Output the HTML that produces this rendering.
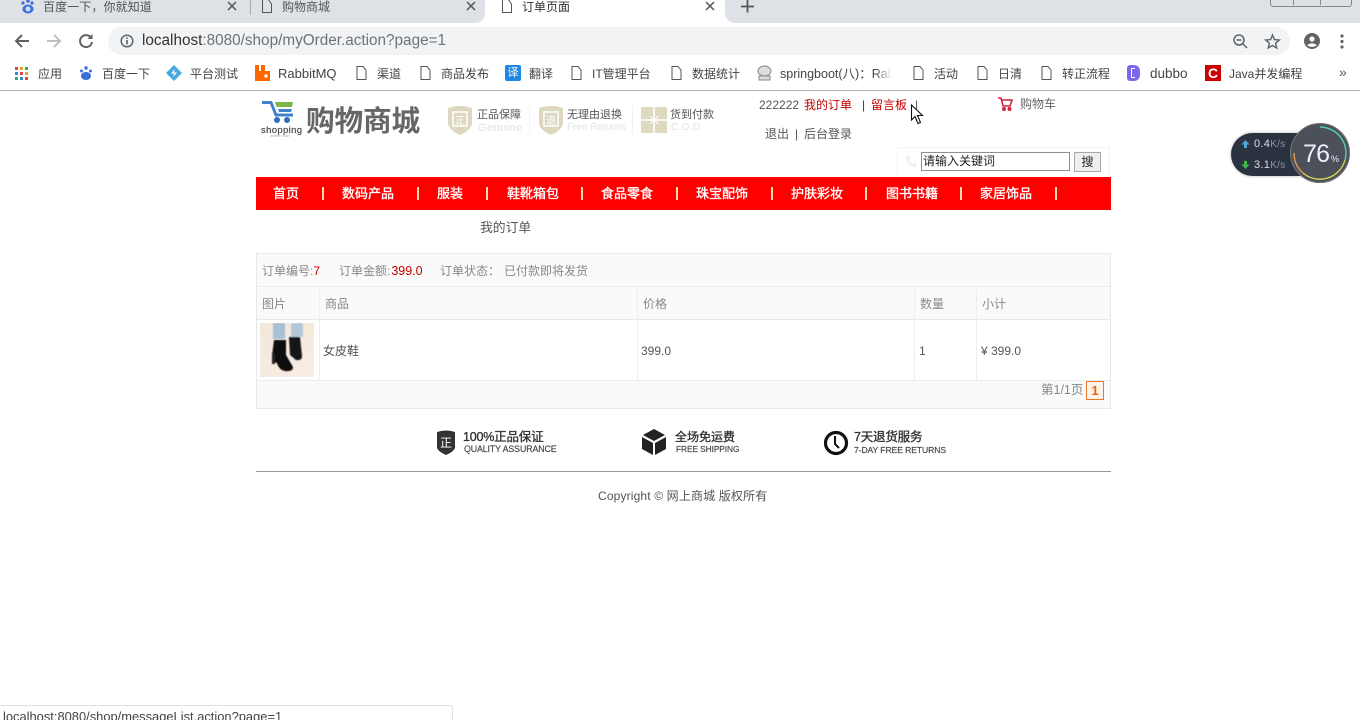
<!DOCTYPE html>
<html lang="zh-CN"><head><meta charset="utf-8"><title>订单页面</title>
<style>
html,body{margin:0;padding:0;width:1360px;height:720px;overflow:hidden;background:#fff}
body{position:relative;font-family:"Liberation Sans","WenQuanYi Zen Hei","Noto Sans CJK SC",sans-serif;font-size:12px;color:#555}
.t{position:absolute;white-space:nowrap;line-height:16px;height:16px}
.b{position:absolute}
svg{position:absolute;overflow:visible}
.bm{font-size:12px;color:#444}
.nav{color:#fff;font-size:13px;font-weight:normal;-webkit-text-stroke:.35px #fff;top:186px}
.sep{top:187px;width:1.5px;height:13px;background:#ffd9b0;position:absolute}
.r{color:#c40000}
.g{color:#888}
.fc{font-size:12.5px;font-weight:normal;color:#333;-webkit-text-stroke:.35px #333;letter-spacing:-.2px}
.fe{font-size:8.8px;color:#444;letter-spacing:-.1px;-webkit-text-stroke:.15px #444}
</style></head><body>
<!-- tab strip -->
<div class="b" style="left:0;top:0;width:1360px;height:23px;background:#dee1e6"></div>
<div class="b" style="left:475px;top:0;width:260px;height:24px;background:#dee1e6"></div>
<div class="b" style="left:485px;top:0;width:240px;height:24px;background:#fff"></div>
<div class="b" style="left:475px;top:12px;width:10px;height:12px;background:#fff"></div>
<div class="b" style="left:465px;top:0;width:20px;height:23px;background:#dee1e6;border-bottom-right-radius:10px"></div>
<div class="b" style="left:725px;top:12px;width:10px;height:12px;background:#fff"></div>
<div class="b" style="left:725px;top:0;width:20px;height:23px;background:#dee1e6;border-bottom-left-radius:10px"></div>
<svg style="left:20px;top:0" width="16" height="14"><circle cx="3" cy="3" r="1.6" fill="#3b6fd8"/><circle cx="8" cy="1" r="1.8" fill="#3b6fd8"/><circle cx="12" cy="3" r="1.6" fill="#3b6fd8"/><ellipse cx="8" cy="9" rx="5.5" ry="4.5" fill="#3b6fd8"/><ellipse cx="8" cy="9" rx="2.5" ry="2.5" fill="#cfe0fb"/></svg>
<span class="t" style="left:43px;top:-1px;color:#555;letter-spacing:.1px">百度一下，你就知道</span>
<svg style="left:227px;top:1px" width="10" height="10" stroke="#555" stroke-width="1.5"><path d="M1 1L9 9M9 1L1 9"/></svg>
<div class="b" style="left:250px;top:0;width:1px;height:15px;background:#aaa"></div>
<svg style="left:261px;top:0" width="12" height="13" fill="none" stroke="#555"><path d="M1.5 -1V12.5H10.5V4L7 -1"/></svg>
<span class="t" style="left:282px;top:-1px;color:#555">购物商城</span>
<svg style="left:466px;top:1px" width="10" height="10" stroke="#555" stroke-width="1.5"><path d="M1 1L9 9M9 1L1 9"/></svg>
<svg style="left:501px;top:0" width="12" height="13" fill="none" stroke="#555"><path d="M1.5 -1V12.5H10.5V4L7 -1"/></svg>
<span class="t" style="left:522px;top:-1px;color:#333">订单页面</span>
<svg style="left:705px;top:1px" width="10" height="10" stroke="#555" stroke-width="1.5"><path d="M1 1L9 9M9 1L1 9"/></svg>
<svg style="left:741px;top:0" width="13" height="13" stroke="#555" stroke-width="1.8"><path d="M6.5 0V12.5M0 6.5H13"/></svg>
<div class="b" style="left:1270px;top:-6px;width:80px;height:11px;border:1px solid #888;border-radius:3px"></div>
<div class="b" style="left:1293px;top:-4px;width:1px;height:9px;background:#888"></div>
<div class="b" style="left:1320px;top:-4px;width:1px;height:9px;background:#888"></div>
<!-- toolbar -->
<svg style="left:14px;top:33px" width="16" height="16" fill="none" stroke="#5f6368" stroke-width="2"><path d="M15 8H2M8 2L2 8L8 14"/></svg>
<svg style="left:46px;top:33px" width="16" height="16" fill="none" stroke="#bdc1c6" stroke-width="2"><path d="M1 8H14M8 2L14 8L8 14"/></svg>
<svg style="left:78px;top:33px" width="16" height="16" fill="none" stroke="#5f6368" stroke-width="2"><path d="M13.2 5A6 6 0 1 0 14 9"/><path d="M14.5 1V6H9.5" fill="#5f6368" stroke="none"/></svg>
<div class="b" style="left:108px;top:27px;width:1182px;height:28px;background:#f1f3f4;border-radius:14px"></div>
<svg style="left:120px;top:34px" width="14" height="14" fill="none" stroke="#5f6368" stroke-width="1.5"><circle cx="7" cy="7" r="5.8"/><path d="M7 6V10.5M7 3.5V5" stroke-width="1.6"/></svg>
<span class="t" style="left:142px;top:33px;font-size:15.3px;color:#333">localhost<span style="color:#6f7276">:8080/shop/myOrder.action?page=1</span></span>
<svg style="left:1233px;top:34px" width="15" height="15" fill="none" stroke="#5f6368" stroke-width="1.5"><circle cx="6" cy="6" r="5"/><path d="M10 10L14 14M3.5 6H8.5"/></svg>
<svg style="left:1265px;top:34px" width="15" height="15" fill="none" stroke="#5f6368" stroke-width="1.4"><path d="M7.5 1L9.4 5.6L14.3 6L10.6 9.2L11.7 14L7.5 11.4L3.3 14L4.4 9.2L.7 6L5.6 5.6Z"/></svg>
<svg style="left:1304px;top:33px" width="16" height="16"><circle cx="8" cy="8" r="8" fill="#5f6368"/><circle cx="8" cy="6" r="2.6" fill="#f6f6f6"/><path d="M3 12Q8 8.5 13 12Q8 16 3 12Z" fill="#f6f6f6"/></svg>
<svg style="left:1340px;top:34px" width="4" height="15" fill="#5f6368"><circle cx="2" cy="2" r="1.6"/><circle cx="2" cy="7.5" r="1.6"/><circle cx="2" cy="13" r="1.6"/></svg>
<!-- bookmarks -->
<svg style="left:15px;top:67px" width="13" height="13"><g fill="#d44"><rect width="3" height="3"/></g><rect x="5" width="3" height="3" fill="#e8a020"/><rect x="10" width="3" height="3" fill="#3a7"/><rect y="5" width="3" height="3" fill="#38c"/><rect x="5" y="5" width="3" height="3" fill="#d44"/><rect x="10" y="5" width="3" height="3" fill="#e8a020"/><rect y="10" width="3" height="3" fill="#3a7"/><rect x="5" y="10" width="3" height="3" fill="#38c"/><rect x="10" y="10" width="3" height="3" fill="#d44"/></svg>
<span class="t bm" style="left:38px;top:66px">应用</span>
<svg style="left:79px;top:66px" width="14" height="14"><circle cx="2.5" cy="5" r="1.5" fill="#3b6fd8"/><circle cx="7" cy="2" r="1.7" fill="#3b6fd8"/><circle cx="11.5" cy="5" r="1.5" fill="#3b6fd8"/><ellipse cx="7" cy="10" rx="5" ry="4" fill="#3b6fd8"/></svg>
<span class="t bm" style="left:102px;top:66px">百度一下</span>
<svg style="left:166px;top:65px" width="16" height="16"><path d="M8 0L16 8L8 16L0 8Z" fill="#4aa8e0"/><path d="M9 4L5 8.5H8L7 12L11 7.5H8Z" fill="#fff"/></svg>
<span class="t bm" style="left:190px;top:66px">平台测试</span>
<svg style="left:255px;top:65px" width="15" height="16"><path d="M0 0H4V6H6V0H10V6H15V16H0Z" fill="#f60"/><rect x="9.5" y="9.5" width="3" height="3" fill="#fff"/></svg>
<span class="t bm" style="left:278px;top:66px;font-size:13px">RabbitMQ</span>
<svg style="left:356px;top:66px" width="11" height="14" fill="none" stroke="#555"><path d="M1 .5V13.5H10V4L7 .5Z"/></svg>
<span class="t bm" style="left:377px;top:66px">渠道</span>
<svg style="left:420px;top:66px" width="11" height="14" fill="none" stroke="#555"><path d="M1 .5V13.5H10V4L7 .5Z"/></svg>
<span class="t bm" style="left:441px;top:66px">商品发布</span>
<div class="b" style="left:505px;top:65px;width:16px;height:16px;background:#1e88e5;border-radius:2px;color:#fff;font-size:11px;line-height:16px;text-align:center">译</div>
<span class="t bm" style="left:529px;top:66px">翻译</span>
<svg style="left:571px;top:66px" width="11" height="14" fill="none" stroke="#555"><path d="M1 .5V13.5H10V4L7 .5Z"/></svg>
<span class="t bm" style="left:592px;top:66px">IT管理平台</span>
<svg style="left:671px;top:66px" width="11" height="14" fill="none" stroke="#555"><path d="M1 .5V13.5H10V4L7 .5Z"/></svg>
<span class="t bm" style="left:692px;top:66px">数据统计</span>
<svg style="left:757px;top:65px" width="15" height="16" fill="#ddd" stroke="#888"><ellipse cx="7.5" cy="6" rx="6.5" ry="5"/><path d="M2 11H13V15H2Z"/></svg>
<span class="t bm" style="left:780px;top:66px;font-size:12.5px;width:112px;overflow:hidden;-webkit-mask-image:linear-gradient(90deg,#000 85%,transparent)">springboot(八)：RabbitMQ</span>
<svg style="left:913px;top:66px" width="11" height="14" fill="none" stroke="#555"><path d="M1 .5V13.5H10V4L7 .5Z"/></svg>
<span class="t bm" style="left:934px;top:66px">活动</span>
<svg style="left:977px;top:66px" width="11" height="14" fill="none" stroke="#555"><path d="M1 .5V13.5H10V4L7 .5Z"/></svg>
<span class="t bm" style="left:998px;top:66px">日清</span>
<svg style="left:1041px;top:66px" width="11" height="14" fill="none" stroke="#555"><path d="M1 .5V13.5H10V4L7 .5Z"/></svg>
<span class="t bm" style="left:1062px;top:66px">转正流程</span>
<div class="b" style="left:1127px;top:65px;width:13px;height:16px;background:#7b68ee;border-radius:3px 6px 6px 3px"></div>
<div class="b" style="left:1131px;top:68px;width:3px;height:8px;border-left:1px solid #fff;border-top:1px solid #fff;border-bottom:1px solid #fff"></div>
<span class="t bm" style="left:1150px;top:66px;font-size:13.5px">dubbo</span>
<div class="b" style="left:1205px;top:65px;width:16px;height:16px;background:#c00;color:#fff;font-size:14px;font-weight:bold;line-height:16px;text-align:center">C</div>
<span class="t bm" style="left:1229px;top:66px">Java并发编程</span>
<span class="t" style="left:1339px;top:64px;font-size:14px;color:#555">»</span>
<div class="b" style="left:0;top:90px;width:1360px;height:1px;background:#b4b4b4"></div>

<!-- logo -->
<svg style="left:261px;top:101px" width="42" height="36"><path d="M1 1.5H10L15 14H32" fill="none" stroke="#3f83cc" stroke-width="3"/><path d="M14 1H32L31 6H15.5Z" fill="#7ab648"/><path d="M17 8H31L30 11H18Z" fill="#3f83cc"/><circle cx="16" cy="19" r="3" fill="#2f6db5"/><circle cx="26" cy="19" r="3" fill="#2f6db5"/><text x="0" y="32" font-size="9.5" fill="#444" stroke="#444" stroke-width=".15" font-family="Liberation Sans" textLength="41">shopping</text><text x="9" y="36" font-size="4" fill="#aaa" font-family="Liberation Sans">online mart</text></svg>
<span class="t" style="left:306px;top:104px;height:32px;line-height:32px;font-size:28.7px;font-weight:bold;color:#666;letter-spacing:-.2px;font-family:'Noto Sans CJK SC',sans-serif">购物商城</span>
<!-- badges -->
<svg style="left:447px;top:105px" width="26" height="31"><path d="M1 3Q13 -1 25 3V17Q25 25 13 30Q1 25 1 17Z" fill="#ded7bf"/><rect x="6" y="7" width="14" height="14" fill="none" stroke="#fff" stroke-width="1.5"/><text x="13" y="19" text-anchor="middle" font-size="10" fill="#fff" font-family="WenQuanYi Zen Hei">正</text></svg>
<span class="t" style="left:477px;top:107px;font-size:11px;color:#555">正品保障</span>
<span class="t" style="left:478px;top:120px;font-size:11px;color:#e2e2e2;letter-spacing:.4px">Genuine</span>
<svg style="left:538px;top:105px" width="26" height="31"><path d="M1 3Q13 -1 25 3V17Q25 25 13 30Q1 25 1 17Z" fill="#ded7bf"/><rect x="6" y="7" width="14" height="14" fill="none" stroke="#fff" stroke-width="1.5"/><text x="13" y="19" text-anchor="middle" font-size="10" fill="#fff" font-family="WenQuanYi Zen Hei">退</text></svg>
<span class="t" style="left:567px;top:107px;font-size:11px;color:#555">无理由退换</span>
<span class="t" style="left:567px;top:120px;font-size:10px;color:#e2e2e2">Free Returns</span>
<div class="b" style="left:529px;top:106px;width:1px;height:28px;background:#f2f2f2"></div>
<div class="b" style="left:632px;top:106px;width:1px;height:28px;background:#f2f2f2"></div>
<svg style="left:641px;top:107px" width="26" height="26"><rect width="26" height="26" fill="#e0d9c2"/><path d="M13 0V26M0 13H26" stroke="#fff" stroke-width="1.5"/><path d="M9 9L17 17M17 9L9 17" stroke="#fff"/></svg>
<span class="t" style="left:670px;top:107px;font-size:11px;color:#555">货到付款</span>
<span class="t" style="left:671px;top:120px;font-size:10px;color:#e2e2e2;letter-spacing:.3px">C.O.D</span>

<!-- user links -->
<span class="t" style="left:759px;top:97px">222222</span>
<span class="t r" style="left:804px;top:97px">我的订单</span>
<span class="t r" style="left:862px;top:97px">|</span>
<span class="t r" style="left:871px;top:97px">留言板</span>
<span class="t" style="left:915px;top:97px">|</span>
<svg style="left:910px;top:104px" width="14" height="21"><path d="M1.5 1V16L5 12.5L8 19.5L10.5 18.5L7.5 11.5H12.5Z" fill="#fff" stroke="#111" stroke-width="1.1"/></svg>
<svg style="left:998px;top:97px" width="16" height="14" fill="none" stroke="#d2233c" stroke-width="1.6"><path d="M0 1H3L5 9H12L14 3H4"/><circle cx="6" cy="12" r="1.2" fill="#d2233c"/><circle cx="11.5" cy="12" r="1.2" fill="#d2233c"/></svg>
<span class="t" style="left:1020px;top:96px;color:#666">购物车</span>
<span class="t" style="left:765px;top:126px">退出</span>
<span class="t" style="left:795px;top:126px">|</span>
<span class="t" style="left:804px;top:126px">后台登录</span>
<!-- search -->
<div class="b" style="left:897px;top:147px;width:213px;height:29px;border:1px solid #f4f4f4;border-bottom:none;box-sizing:border-box"></div>
<svg style="left:905px;top:155px" width="12" height="13" fill="#efefef"><path d="M1 1L4 0L6 4L4 6Q5 9 8 9L10 7L12 10L10 12Q2 12 1 1Z"/></svg>
<div class="b" style="left:921px;top:152px;width:146px;height:17px;border:1px solid #8f8f8f;color:#222;font-size:12px;line-height:17px;padding-left:1px">请输入关键词</div>
<div class="b" style="left:1074px;top:152px;width:25px;height:18px;border:1px solid #a6a6a6;background:#efefef;color:#222;font-size:12px;line-height:18px;text-align:center;border-radius:1px">搜</div>
<!-- nav -->
<div class="b" style="left:256px;top:177px;width:855px;height:33px;background:#f00"></div>
<span class="t nav" style="left:273px">首页</span><i class="sep" style="left:322px"></i>
<span class="t nav" style="left:342px">数码产品</span><i class="sep" style="left:417px"></i>
<span class="t nav" style="left:437px">服装</span><i class="sep" style="left:486px"></i>
<span class="t nav" style="left:507px">鞋靴箱包</span><i class="sep" style="left:581px"></i>
<span class="t nav" style="left:601px">食品零食</span><i class="sep" style="left:676px"></i>
<span class="t nav" style="left:696px">珠宝配饰</span><i class="sep" style="left:771px"></i>
<span class="t nav" style="left:791px">护肤彩妆</span><i class="sep" style="left:865px"></i>
<span class="t nav" style="left:886px">图书书籍</span><i class="sep" style="left:960px"></i>
<span class="t nav" style="left:980px">家居饰品</span><i class="sep" style="left:1055px"></i>

<span class="t" style="left:480px;top:220px;font-size:12.8px">我的订单</span>

<!-- table -->
<div class="b" style="left:256px;top:253px;width:855px;height:156px;box-sizing:border-box;border:1px solid #e8e8e8;background:#fafafa"></div>
<div class="b" style="left:257px;top:286px;width:853px;height:1px;background:#ececec"></div>
<div class="b" style="left:257px;top:319px;width:853px;height:1px;background:#e8e8e8"></div>
<div class="b" style="left:257px;top:320px;width:853px;height:60px;background:#fff"></div>
<div class="b" style="left:257px;top:380px;width:853px;height:1px;background:#ececec"></div>
<div class="b" style="left:319px;top:287px;width:1px;height:93px;background:#eee"></div>
<div class="b" style="left:637px;top:287px;width:1px;height:93px;background:#eee"></div>
<div class="b" style="left:914px;top:287px;width:1px;height:93px;background:#eee"></div>
<div class="b" style="left:976px;top:287px;width:1px;height:93px;background:#eee"></div>
<span class="t g" style="left:262px;top:263px">订单编号:<span class="r">7</span></span>
<span class="t g" style="left:339px;top:263px">订单金额:<span class="r" style="font-size:12.5px;margin-left:1px">399.0</span></span>
<span class="t g" style="left:440px;top:263px">订单状态：</span>
<span class="t g" style="left:504px;top:263px">已付款即将发货</span>
<span class="t g" style="left:262px;top:296px">图片</span>
<span class="t g" style="left:325px;top:296px">商品</span>
<span class="t g" style="left:643px;top:296px">价格</span>
<span class="t g" style="left:920px;top:296px">数量</span>
<span class="t g" style="left:982px;top:296px">小计</span>
<svg style="left:260px;top:323px" width="54" height="54"><defs><linearGradient id="sk" x1="0" y1="0" x2="1" y2="1"><stop offset="0" stop-color="#f3e8dc"/><stop offset="1" stop-color="#f8ece4"/></linearGradient><clipPath id="cp"><rect width="54" height="54"/></clipPath><filter id="bl"><feGaussianBlur stdDeviation=".5"/></filter></defs><g clip-path="url(#cp)"><rect width="54" height="54" fill="url(#sk)"/><g filter="url(#bl)"><rect x="13" y="0" width="12" height="16" fill="#a8c0d4"/><rect x="31" y="0" width="12" height="14" fill="#b2c8d8"/><path d="M42 0H54V14L46 8Z" fill="#f2ecd4"/><path d="M29 14H40L42 33Q42 38 36 37L30 32Z" fill="#161616"/><path d="M14 17H26V32L33 44Q33 49 25 48Q19 47 17 40L14 39L12 33Z" fill="#111"/><path d="M12 30H15V41H12Z" fill="#222"/></g></g></svg>
<span class="t" style="left:323px;top:343px;color:#555">女皮鞋</span>
<span class="t" style="left:641px;top:343px;color:#555">399.0</span>
<span class="t" style="left:919px;top:343px;color:#555">1</span>
<span class="t" style="left:981px;top:343px;color:#555">¥ 399.0</span>
<span class="t g" style="left:1041px;top:382px;font-size:12.5px">第1/1页</span>
<div class="b" style="left:1086px;top:381px;width:16px;height:17px;border:1px solid #e8792e;background:#fff3e8;color:#e8631a;font-weight:bold;font-size:13px;line-height:17px;text-align:center">1</div>

<!-- guarantees -->
<svg style="left:436px;top:430px" width="20" height="25"><path d="M1 2Q10 -1 19 2V17Q19 21 10 25Q1 21 1 17Z" fill="#333"/><text x="10" y="17" text-anchor="middle" font-size="12" fill="#fff" font-family="WenQuanYi Zen Hei">正</text></svg>
<span class="t fc" style="left:463px;top:429px">100%正品保证</span>
<span class="t fe" style="left:464px;top:441px">QUALITY ASSURANCE</span>
<svg style="left:642px;top:429px" width="24" height="26"><path d="M12 0L23 6L12 12L1 6Z" fill="#222"/><path d="M0 8L11 14V26L0 20Z" fill="#222"/><path d="M24 8L13 14V26L24 20Z" fill="#222"/></svg>
<span class="t fc" style="left:675px;top:429px;font-size:12px;letter-spacing:0">全场免运费</span>
<span class="t fe" style="left:676px;top:441px;font-size:8.4px">FREE SHIPPING</span>
<svg style="left:823px;top:430px" width="26" height="26" fill="none" stroke="#111"><circle cx="13" cy="13" r="10.5" stroke-width="3.2"/><path d="M12 6V14L16 18" stroke-width="2"/></svg>
<span class="t fc" style="left:854px;top:429px">7天退货服务</span>
<span class="t fe" style="left:854px;top:442px;font-size:8.6px">7-DAY FREE RETURNS</span>
<div class="b" style="left:256px;top:471px;width:855px;height:1px;background:#999"></div>
<span class="t" style="left:598px;top:488px;color:#555;letter-spacing:.15px">Copyright © 网上商城 版权所有</span>

<!-- speed widget -->
<div class="b" style="left:1231px;top:133px;width:90px;height:43px;background:#2c3340;border-radius:22px;box-shadow:0 0 3px rgba(0,0,0,.3)"></div>
<svg style="left:1241px;top:140px" width="9" height="9" fill="#4aa8d8"><path d="M4.5 0L8.5 4.5H6V8H3V4.5H.5Z"/></svg>
<svg style="left:1241px;top:161px" width="9" height="9" fill="#3fb54a"><path d="M4.5 8L8.5 3.5H6V0H3V3.5H.5Z"/></svg>
<span class="t" style="left:1254px;top:136px;font-size:11px;color:#dde;letter-spacing:.3px">0.4<span style="color:#8d93a0;font-size:10px">K/s</span></span>
<span class="t" style="left:1254px;top:157px;font-size:11px;color:#dde;letter-spacing:.3px">3.1<span style="color:#8d93a0;font-size:10px">K/s</span></span>
<svg style="left:1290px;top:123px" width="60" height="60" fill="none"><circle cx="30" cy="30" r="30" fill="#4c5059"/><circle cx="30" cy="30" r="29.5" stroke="#777" stroke-width="1"/><path d="M30 4A26 26 0 0 1 55 37" stroke="#4fd0b8" stroke-width="1.4"/><path d="M55 37A26 26 0 0 1 13 50" stroke="#d8cf56" stroke-width="1.4"/><path d="M13 50A26 26 0 0 1 4 30" stroke="#e8a050" stroke-width="1.4"/><text x="13" y="39" font-size="25" fill="#eef" font-family="Liberation Sans" stroke="none" textLength="27">76</text><text x="41" y="39" font-size="9" fill="#eef" font-family="Liberation Sans" stroke="none">%</text></svg>

<!-- status bubble -->
<div class="b" style="left:-2px;top:705px;width:455px;height:20px;background:#fff;border:1px solid #e0e0e0;border-radius:3px;box-sizing:border-box"></div>
<span class="t" style="left:3px;top:709px;font-size:12.9px;color:#444">localhost:8080/shop/messageList.action?page=1</span>
</body></html>
